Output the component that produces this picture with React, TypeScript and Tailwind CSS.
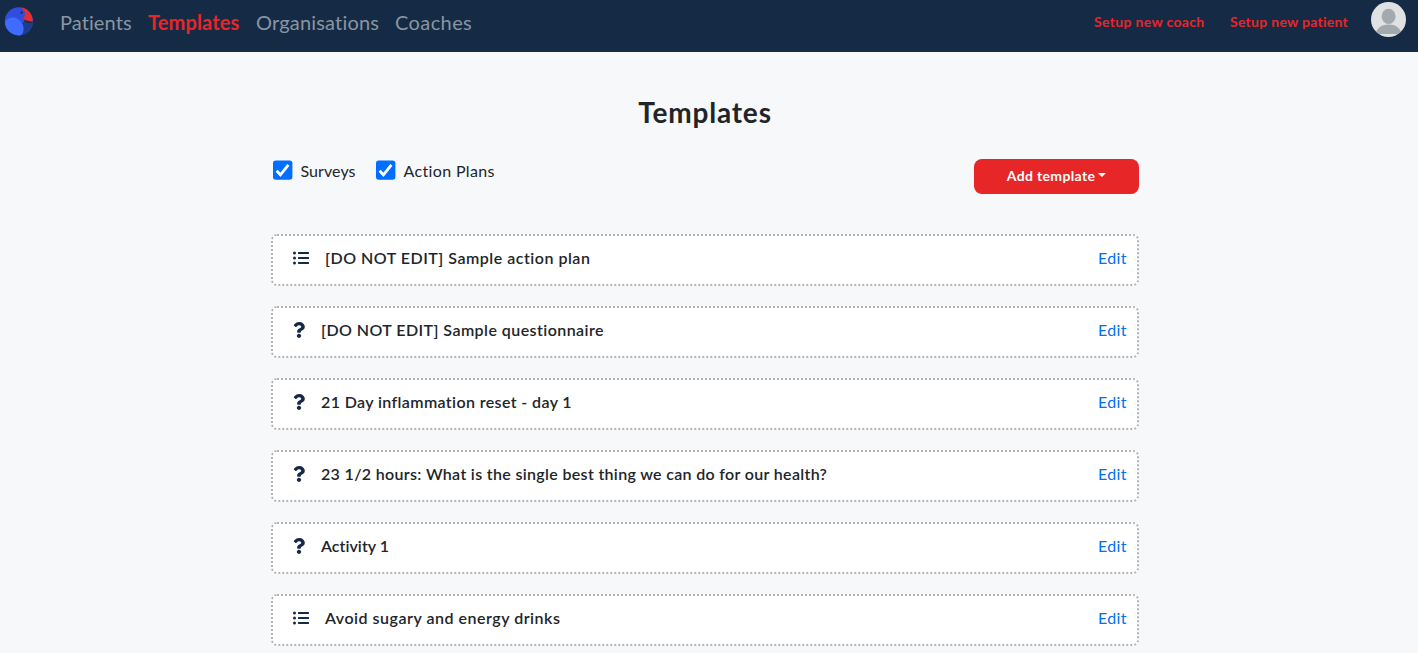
import { FaListUl, FaQuestion } from "react-icons/fa";

type Template = { kind: "plan" | "survey"; title: string; tracking: string };

const templates: Template[] = [
  { kind: "plan", title: "[DO NOT EDIT] Sample action plan", tracking: "tracking-[0.51px]" },
  { kind: "survey", title: "[DO NOT EDIT] Sample questionnaire", tracking: "tracking-[0.44px]" },
  { kind: "survey", title: "21 Day inflammation reset - day 1", tracking: "tracking-[0.38px]" },
  { kind: "survey", title: "23 1/2 hours: What is the single best thing we can do for our health?", tracking: "tracking-[0.33px]" },
  { kind: "survey", title: "Activity 1", tracking: "tracking-[0.05px]" },
  { kind: "plan", title: "Avoid sugary and energy drinks", tracking: "tracking-[0.51px]" },
];

function Logo() {
  return (
    <svg viewBox="0 0 30 30" className="h-[30px] w-[30px]">
      <defs>
        <clipPath id="logo-disc">
          <circle cx="14.9" cy="15.3" r="14.1" />
        </clipPath>
      </defs>
      <g clipPath="url(#logo-disc)">
        <rect width="30" height="30" fill="#304edb" />
        <path d="M15 18L21 15.6L30 16V30H14Z" fill="#1d3c8e" />
        <path d="M20.5 13.4L30 15.4L28.6 16.6Q24 17.6 20 15.2Z" fill="#152b45" />
        <ellipse cx="10" cy="21.4" rx="9" ry="10.6" transform="rotate(-40 10 21.4)" fill="#3f6bff" />
      </g>
      <path d="M17.6 1.6C23.6 2.5 28.4 7.6 28.9 15.6C25.8 15.6 22.3 14.9 19.6 13.3C20.3 10.8 21.8 8 20.6 5.6C20 4.2 17.9 3.5 17.6 1.6Z" fill="#e72d31" />
      <circle cx="17.6" cy="6.6" r="1.2" fill="#152b6b" />
    </svg>
  );
}

function Avatar() {
  return (
    <svg viewBox="0 0 35 35" className="h-[35px] w-[35px] rounded-full">
      <rect width="35" height="35" fill="#dfe1e3" />
      <ellipse cx="17.6" cy="14.4" rx="7" ry="7.6" fill="#a3a9ad" />
      <path d="M4.5 32C6 25.5 11 22.4 17.6 22.4S29.2 25.5 30.7 32Z" fill="#a3a9ad" />
    </svg>
  );
}

function Check({ label, className }: { label: string; className: string }) {
  return (
    <label className={`flex items-start ${className}`}>
      <svg viewBox="0 0 20 20" className="mt-px mr-[7.5px] h-5 w-5">
        <rect x="0" y="0.4" width="19.4" height="19.4" rx="2.8" fill="#006eff" />
        <path d="M3.6 10.8L7.4 14.8L15.4 4.8" fill="none" stroke="#fff" strokeWidth="2.8" />
      </svg>
      <span className="whitespace-nowrap">{label}</span>
    </label>
  );
}

export default function App() {
  return (
    <div className="h-[653px] overflow-hidden bg-[#f7f8fa] font-['Lato',sans-serif] text-base text-[#212529]">
      <header className="flex h-[52px] items-start justify-between bg-[#152b45] pr-3 pl-1">
        <div className="flex pt-[6px]">
          <Logo />
          <nav className="ml-[26px] flex gap-4 text-xl leading-8 text-[#8a95a2]">
            <a className="w-[72px] tracking-[0.1px] whitespace-nowrap">Patients</a>
            <a className="w-[92px] font-bold tracking-[0.15px] whitespace-nowrap text-[#e72628]">Templates</a>
            <a className="w-[123px] tracking-[0.18px] whitespace-nowrap">Organisations</a>
            <a className="tracking-[0.4px] whitespace-nowrap">Coaches</a>
          </nav>
        </div>
        <div className="flex pt-[2px] text-sm font-bold text-[#e72628]">
          <a className="w-[136px] pt-[10px] pl-px tracking-[0.33px] whitespace-nowrap">Setup new coach</a>
          <a className="w-[142px] pt-[10px] pl-px tracking-[0.28px] whitespace-nowrap">Setup new patient</a>
          <Avatar />
        </div>
      </header>
      <main className="ml-[271px] w-[868px]">
        <h1 className="pt-[42px] text-center text-[28px] leading-9 font-bold tracking-[0.8px]">Templates</h1>
        <div className="mt-[29px] flex items-start justify-between">
          <div className="flex pl-[2px]">
            <Check label="Surveys" className="w-[103px] tracking-[0.08px]" />
            <Check label="Action Plans" className="w-[130px] tracking-[0.35px]" />
          </div>
          <button className="flex h-[35px] w-[165px] items-center justify-center rounded-lg bg-[#e72628] pb-0.5 text-sm font-bold tracking-[0.35px] text-white">
            Add template
            <span className="mb-px ml-[3px] border-x-4 border-t-4 border-x-transparent border-t-white" />
          </button>
        </div>
        <ul className="mt-10 flex flex-col gap-5">
          {templates.map((t) => (
            <li key={t.title} className="flex h-[52px] items-center rounded-md border-2 border-dotted border-[#b3b3b3] bg-white pr-[10px] pb-1 pl-5">
              {t.kind === "plan" ? (
                <FaListUl className="mr-4 h-4 w-4 text-[#152b45]" />
              ) : (
                <FaQuestion className="mr-4 h-4 w-3 text-[#152b45]" />
              )}
              <span className={`font-semibold whitespace-nowrap ${t.tracking}`}>{t.title}</span>
              <a className="ml-auto tracking-[0.4px] text-[#0070f0]">Edit</a>
            </li>
          ))}
        </ul>
      </main>
    </div>
  );
}
